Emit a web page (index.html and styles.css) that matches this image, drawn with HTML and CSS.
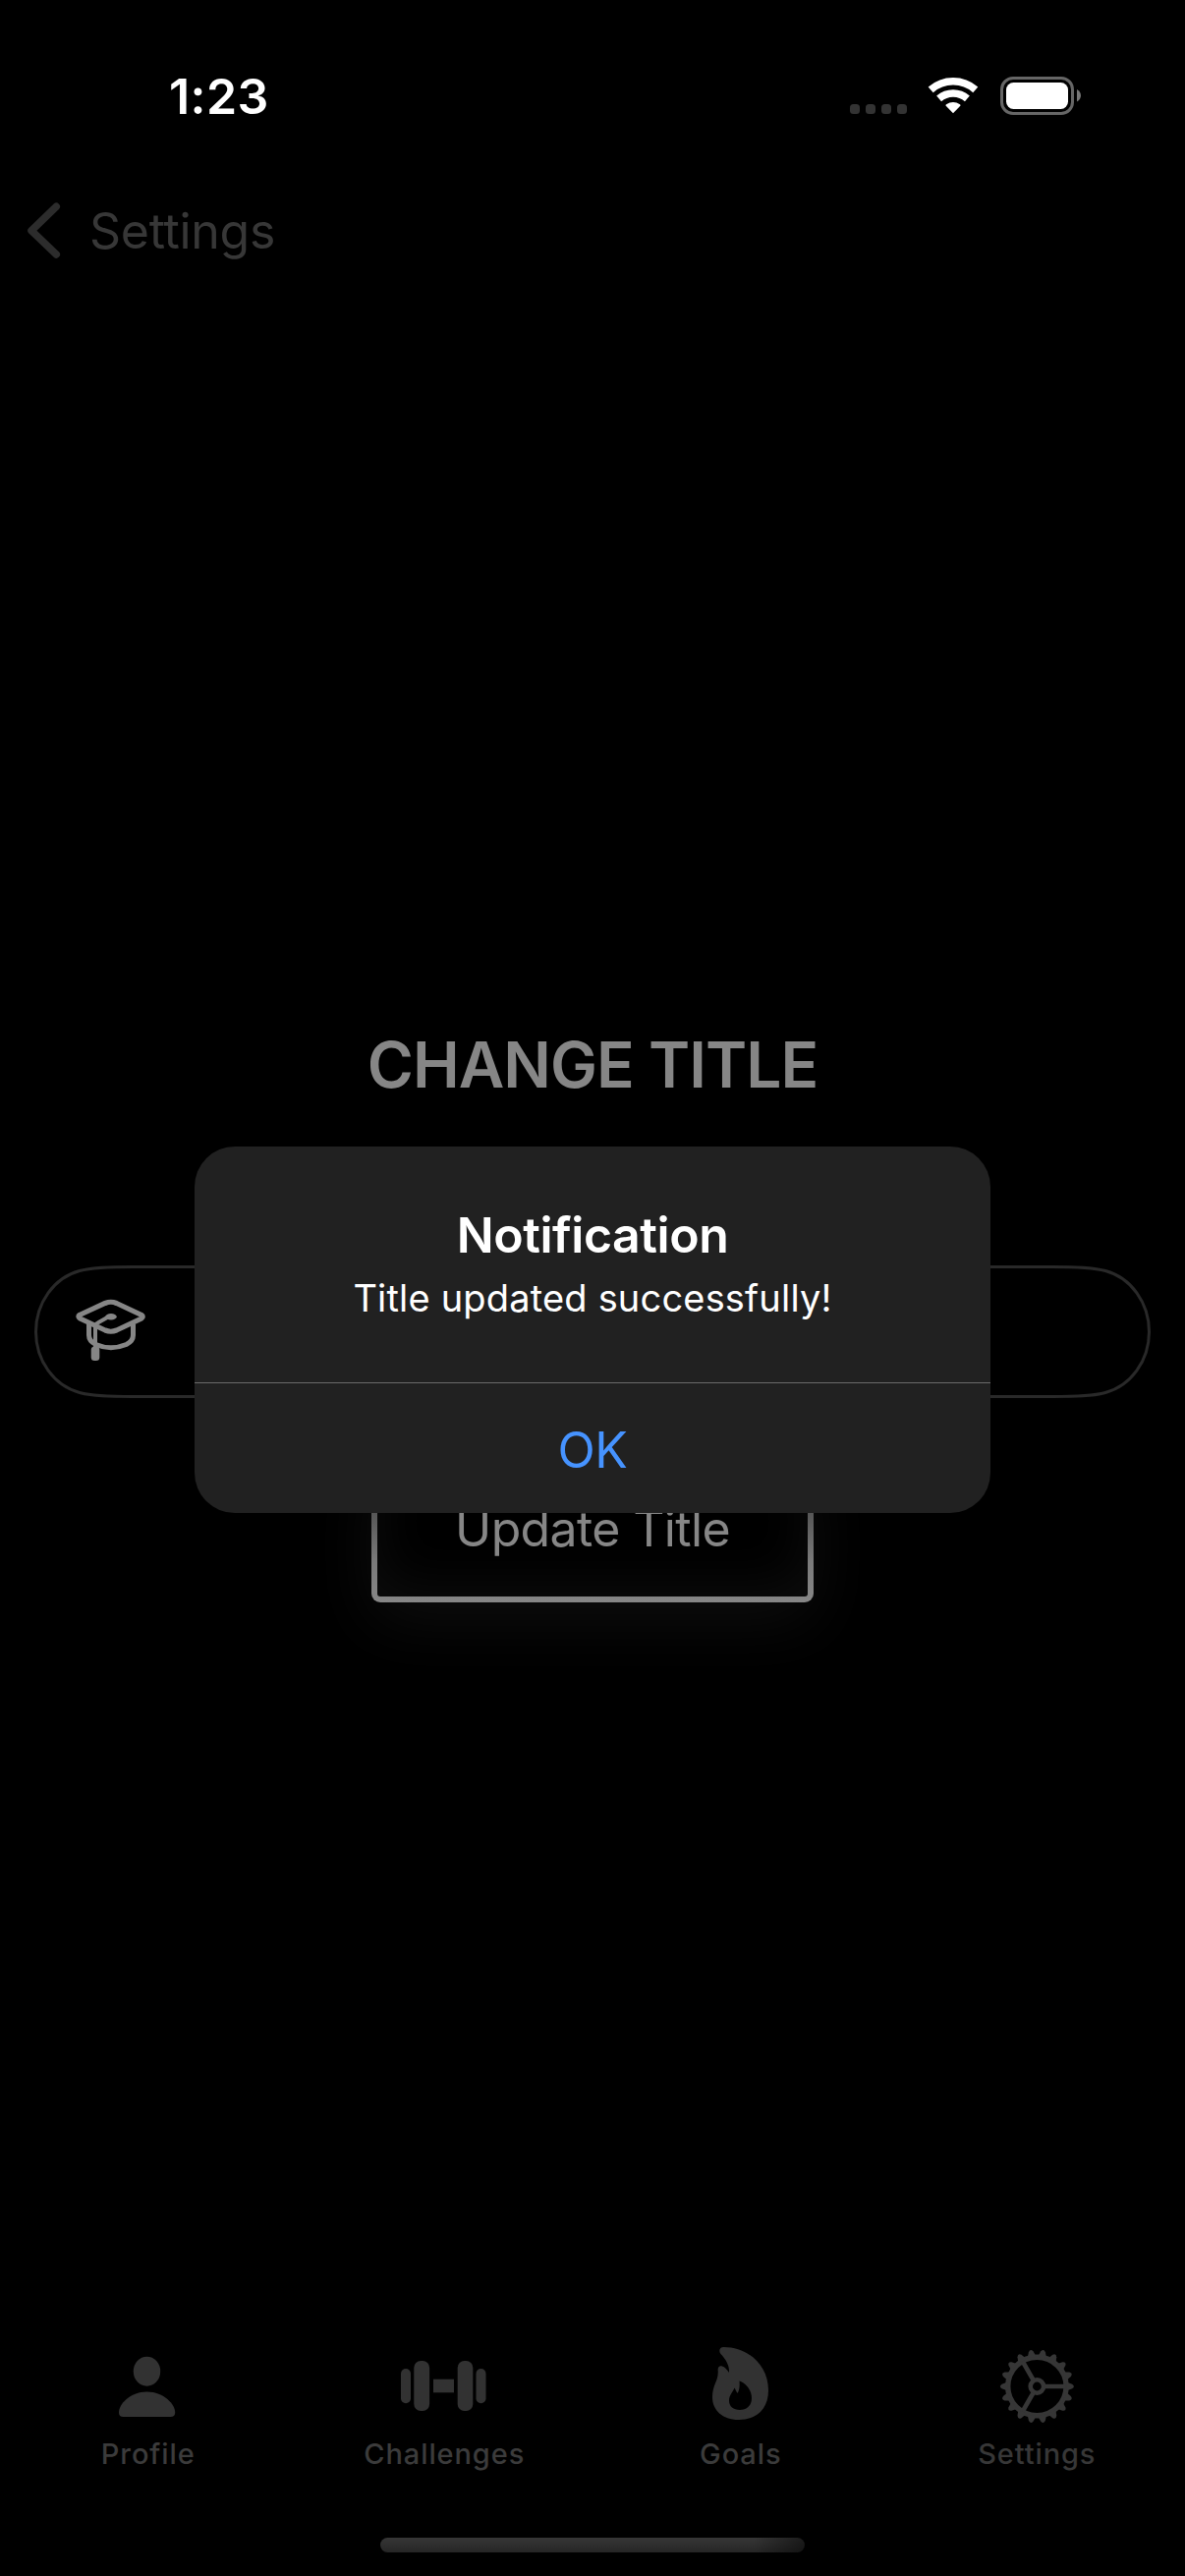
FILE: index.html
```html
<!DOCTYPE html>
<html lang="en">
<head>
<meta charset="utf-8">
<title>Change Title</title>
<link rel="stylesheet" href="styles.css">
</head>
<body>
<div class="screen">
  <header class="status">
    <span class="time">1:23</span>
    <div class="status-icons">
      <div class="cell"><i></i><i></i><i></i><i></i></div>
      <svg class="wifi" width="52" height="40" viewBox="0 0 52 40">
        <g fill="none" stroke="#fff">
          <path d="M3.2 14.3A34.5 34.5 0 0 1 48.8 14.3" stroke-width="7.6"/>
          <path d="M11.6 23.4A21.8 21.8 0 0 1 40.4 23.4" stroke-width="7.4"/>
        </g>
        <path d="M26 38.3L18.7 30.8Q18 30 19 29.2Q26 24.8 33 29.2Q34 30 33.300 30.800Z" fill="#fff"/>
      </svg>
      <svg class="battery" width="84" height="40" viewBox="0 0 84 40">
        <rect x="1.500" y="1.500" width="72" height="36" rx="11.500" fill="none" stroke="#666" stroke-width="3"/>
        <rect x="6" y="6" width="63" height="27" rx="7.500" fill="#fff"/>
        <path d="M78 13Q82 15.500 82 19.200Q82 23 78 25.500Z" fill="#777"/>
      </svg>
    </div>
  </header>

  <nav class="navbar">
    <svg width="34" height="58" viewBox="0 0 34 58"><path d="M29.300 4.300L4 28.800L29.300 53" fill="none" stroke="#2c2c2c" stroke-width="7.500" stroke-linecap="round" stroke-linejoin="round"/></svg>
    <span class="back-label">Settings</span>
  </nav>

  <main class="content">
    <h1 class="heading">CHANGE TITLE</h1>
    <div class="field">
      <svg class="field-outline" width="1136" height="135" viewBox="0 0 1136 135" fill="none" stroke="#292929" stroke-width="3">
        <path d="M100 1.500H1036C1061 1.500 1076 1.900 1090 5.500C1116 12.500 1134.500 38 1134.500 67.500C1134.500 97 1116 122.500 1090 129.500C1076 133.100 1061 133.500 1036 133.500H100C75 133.500 60 133.100 46 129.500C20 122.500 1.500 97 1.500 67.500C1.500 38 20 12.500 46 5.500C60 1.900 75 1.500 100 1.500Z"/>
      </svg>
      <svg class="field-icon" width="72" height="66" viewBox="0 0 72 66" fill="none" stroke="#868686">
        <path d="M3.800 16.500L30 4.500Q35.800 2 41.600 4.500L67 16.500Q69.500 18.200 67 20L41.600 32Q35.800 34.500 30 32L4.500 20Q1.800 18.200 3.800 16.500Z" stroke-width="5.200"/>
        <path d="M13.500 26V37Q13.500 43 20.500 46.500Q35.800 53 51.500 46.500Q58.500 43 58.500 37V26" stroke-width="5"/>
        <path d="M20 50V28Q20 25.500 22.500 24.500L33 18.500" stroke-width="4"/>
        <ellipse cx="36" cy="18.200" rx="5.700" ry="3.200" fill="#868686" stroke="none"/>
        <rect x="15.700" y="48.500" width="8.600" height="14.500" rx="3.500" fill="#868686" stroke="none"/>
      </svg>
    </div>
    <button class="update">Update Title</button>
  </main>

  <footer class="tabs">
    <div class="tab">
      <svg width="100" height="84" viewBox="0 0 100 84" fill="#323232">
        <ellipse cx="48.500" cy="33.700" rx="13.700" ry="15"/>
        <path d="M48.500 54.500C66 54.500 77.200 67.500 77.200 75.500Q77.200 80 72.500 80H24.500Q20 80 20 75.500C20 67.500 31 54.500 48.500 54.500Z"/>
      </svg>
      <span>Profile</span>
    </div>
    <div class="tab">
      <svg width="100" height="84" viewBox="0 0 100 84" fill="#323232">
        <rect x="6" y="31" width="10" height="35.300" rx="5"/>
        <rect x="19.300" y="23" width="15.800" height="51" rx="7"/>
        <rect x="39" y="41.700" width="21" height="13.600"/>
        <rect x="63.700" y="23" width="15.600" height="51" rx="7"/>
        <rect x="82.500" y="31" width="10" height="35.300" rx="5"/>
      </svg>
      <span>Challenges</span>
    </div>
    <div class="tab">
      <svg width="100" height="84" viewBox="1 0 100 84" fill="#323232">
        <path fill-rule="evenodd" d="M33.500 9C58 9 79 27 79 53C79 71 68 83 49 83C32 83 22 73 22 60C22 47 28.500 43 27.700 33C27 27 33 26 39 35C39.500 28 36 22 30.500 16C28 12.500 29.500 9 33.500 9ZM49.500 43.500C50 49 49.500 53 47.500 56C46.500 54.500 45.700 52.500 44.500 50.500C42.500 55 39 58 39 63.500C39 69.500 43.500 73 50 73C57 73 62 68.500 62 61C62 53 56.500 46 49.500 43.500Z"/>
      </svg>
      <span>Goals</span>
    </div>
    <div class="tab tab-settings">
      <svg width="100" height="84" viewBox="0 0 100 84" overflow="visible">
        <defs><path id="tooth" d="M-4.600 -30L-2.300 -35.800Q0 -39.200 2.300 -35.800L4.600 -30Z"/></defs>
        <g transform="translate(50.400 49)" fill="#363636" stroke="none">
          <circle r="29.700" fill="none" stroke="#363636" stroke-width="5.400"/>
          <circle r="6.700" fill="none" stroke="#363636" stroke-width="4.600"/>
          <g fill="none" stroke="#363636" stroke-width="4.700"><path d="M8 0H29M-4 -6.900L-14.500 -25.100M-4 6.900L-14.500 25.100"/></g>
          <use href="#tooth" transform="rotate(10)"/><use href="#tooth" transform="rotate(30)"/><use href="#tooth" transform="rotate(50)"/><use href="#tooth" transform="rotate(70)"/><use href="#tooth" transform="rotate(90)"/><use href="#tooth" transform="rotate(110)"/><use href="#tooth" transform="rotate(130)"/><use href="#tooth" transform="rotate(150)"/><use href="#tooth" transform="rotate(170)"/><use href="#tooth" transform="rotate(190)"/><use href="#tooth" transform="rotate(210)"/><use href="#tooth" transform="rotate(230)"/><use href="#tooth" transform="rotate(250)"/><use href="#tooth" transform="rotate(270)"/><use href="#tooth" transform="rotate(290)"/><use href="#tooth" transform="rotate(310)"/><use href="#tooth" transform="rotate(330)"/><use href="#tooth" transform="rotate(350)"/>
        </g>
      </svg>
      <span>Settings</span>
    </div>
  </footer>
  <div class="home-indicator"></div>

  <div class="overlay">
    <section class="alert" role="alertdialog">
      <div class="alert-body">
        <h2>Notification</h2>
        <p>Title updated successfully!</p>
      </div>
      <div class="alert-action">OK</div>
    </section>
  </div>
</div>
</body>
</html>
```
FILE: styles.css
```css
* { box-sizing: border-box; }
body { margin: 0; background: #000; }
.screen {
  position: relative;
  width: 1206px;
  height: 2622px;
  overflow: hidden;
  display: flex;
  flex-direction: column;
  background: #000;
  font-family: Inter, "Liberation Sans", sans-serif;
}

.status {
  height: 177px;
  padding: 68px 104px 0 172px;
  display: flex;
  justify-content: space-between;
  align-items: flex-start;
}
.time {
  color: #fff;
  font-size: 50px;
  line-height: 60px;
  font-weight: 600;
  letter-spacing: 0.4px;
}
.status-icons { display: flex; padding-top: 10px; }
.cell { display: flex; gap: 6px; padding-top: 28px; margin-right: 21px; }
.cell i { width: 10px; height: 10px; border-radius: 3.500px; background: #333; }
.wifi { margin: -1px 22px 0 0; }

.navbar {
  height: 116px;
  padding-left: 28px;
  display: flex;
  align-items: center;
}
.back-label {
  margin-left: 29px;
  color: #373737;
  font-size: 50px;
  line-height: 60px;
  letter-spacing: -0.3px;
}

.content {
  height: 2087px;
  padding-top: 751px;
  display: flex;
  flex-direction: column;
  align-items: center;
}
.heading {
  margin: 0;
  color: #868686;
  font-size: 64px;
  line-height: 80px;
  font-weight: 600;
  letter-spacing: -0.95px;
}
.field {
  position: relative;
  width: 1136px;
  height: 135px;
  margin-top: 164px;
  padding-left: 42px;
  display: flex;
  align-items: center;
}
.field-outline { position: absolute; inset: 0; }
.field-icon { margin-top: -1px; }
.update {
  width: 450px;
  height: 150px;
  margin-top: 58px;
  padding: 0;
  border: 6px solid transparent;
  border-radius: 9px;
  background:
    linear-gradient(#000, #000) padding-box,
    linear-gradient(#303030, #575757 40%, #7a7a7a 72%, #868686) border-box;
  box-shadow: 0 18px 66px rgba(255, 255, 255, .055), inset 0 -8px 55px rgba(255, 255, 255, .05);
  color: #868686;
  font-family: inherit;
  font-size: 50px;
  line-height: 60px;
  letter-spacing: -0.65px;
}

.tabs {
  height: 203px;
  display: grid;
  grid-template-columns: repeat(4, 1fr);
}
.tab {
  display: flex;
  flex-direction: column;
  align-items: center;
  color: #3b3b3b;
  font-size: 29px;
  line-height: 36px;
  font-weight: 450;
  letter-spacing: 0.9px;
}
.tab span { margin-top: 16px; }
.tab-settings { color: #373737; }
.home-indicator {
  width: 432px;
  height: 15px;
  margin: 0 auto;
  border-radius: 7.500px;
  background: linear-gradient(90deg, transparent 88%, rgba(0, 0, 0, .5)), linear-gradient(#363636, #262626);
}

.overlay {
  position: absolute;
  inset: 0;
  padding-top: 1167px;
}
.alert {
  width: 810px;
  height: 373px;
  margin: 0 auto;
  border-radius: 41px;
  background: #212121;
  text-align: center;
}
.alert-body {
  height: 241px;
  padding-top: 60px;
  border-bottom: 1px solid #6a6a6a;
  color: #fff;
}
.alert h2 {
  margin: 0;
  font-size: 50px;
  line-height: 60px;
  font-weight: 600;
  letter-spacing: -0.45px;
}
.alert p {
  margin: 10px 0 0;
  font-size: 38px;
  line-height: 48px;
  letter-spacing: 0.18px;
}
.alert-action {
  padding-top: 38px;
  color: #4693ff;
  font-size: 50px;
  line-height: 60px;
  letter-spacing: -0.5px;
}
```
